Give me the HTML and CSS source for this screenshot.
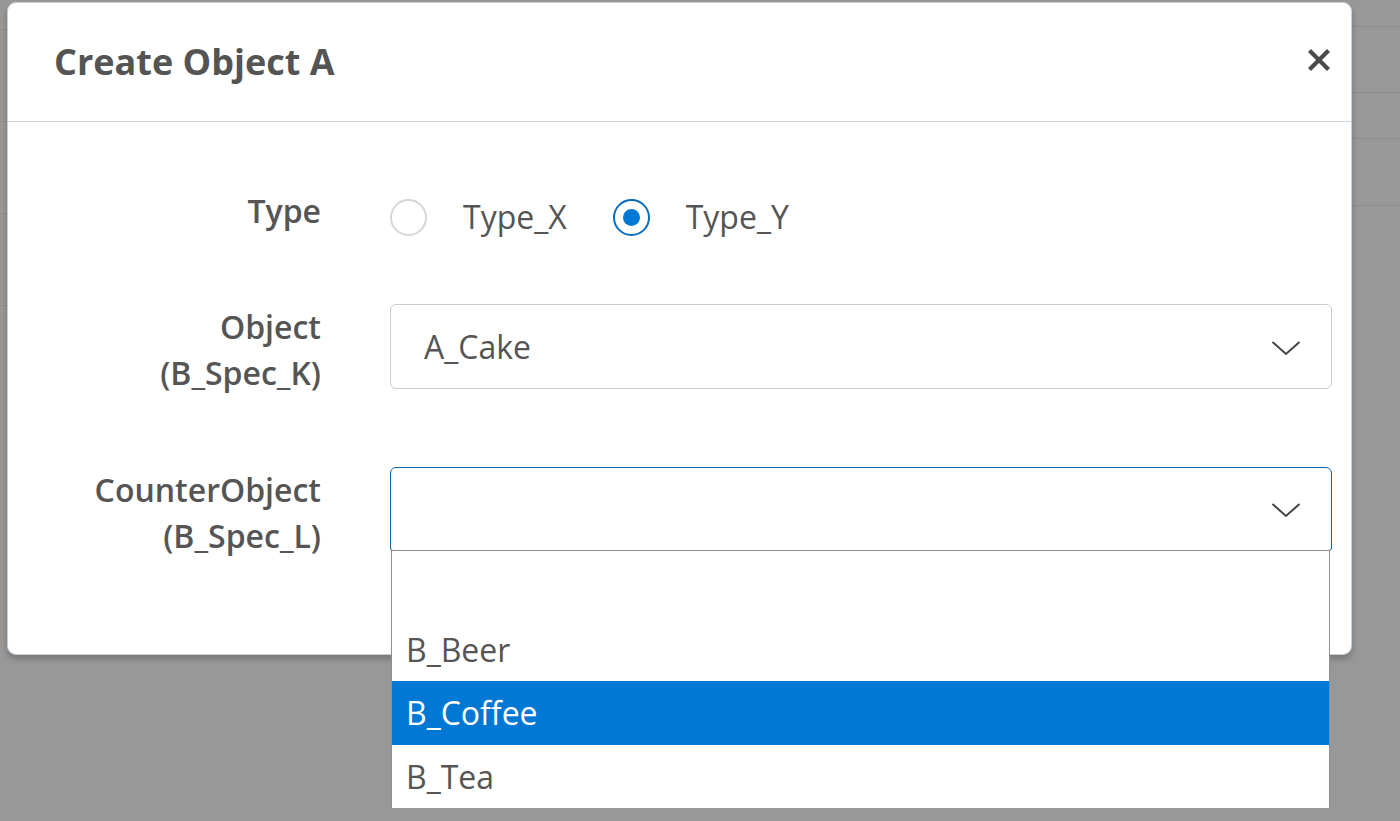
FILE: index.html
```html
<!DOCTYPE html>
<html>
<head>
<meta charset="utf-8">
<link rel="stylesheet" href="styles.css">
</head>
<body>
<div class="page">
  <div class="bg-col bg-left">
    <div class="bg-row r1"></div><div class="bg-row r2"></div><div class="bg-row r2"></div><div class="bg-row r2"></div>
  </div>
  <div class="bg-col bg-right">
    <div class="bg-row q1"></div><div class="bg-row q2"></div><div class="bg-row q3"></div><div class="bg-row q4"></div>
  </div>
</div>

<div class="modal">
  <div class="modal-header">
    <h1 class="title">Create Object A</h1>
    <button class="close" aria-label="Close">
      <svg width="22" height="22" viewBox="0 0 22 22"><path d="M3 3 L19 19 M19 3 L3 19" stroke="#4a4a4a" stroke-width="4.2" stroke-linecap="square"/></svg>
    </button>
  </div>
  <div class="modal-body">
    <div class="row row-type">
      <div class="label">Type</div>
      <div class="control radios">
        <label class="radio"><span class="circle"></span><span class="rtext">Type_X</span></label>
        <label class="radio checked"><span class="circle"><span class="dot"></span></span><span class="rtext">Type_Y</span></label>
      </div>
    </div>
    <div class="row row-obj">
      <div class="label">Object<br>(B_Spec_K)</div>
      <div class="control">
        <div class="select">
          <span class="value">A_Cake</span>
          <svg class="chev" width="30" height="16" viewBox="0 0 30 16"><polyline points="1.5,2 15,14 28.5,2" fill="none" stroke="#454545" stroke-width="2"/></svg>
        </div>
      </div>
    </div>
    <div class="row row-counter">
      <div class="label">CounterObject<br>(B_Spec_L)</div>
      <div class="control">
        <div class="select open">
          <span class="value"></span>
          <svg class="chev" width="30" height="16" viewBox="0 0 30 16"><polyline points="1.5,2 15,14 28.5,2" fill="none" stroke="#454545" stroke-width="2"/></svg>
        </div>
        <ul class="listbox">
          <li class="opt blank">&nbsp;</li>
          <li class="opt">B_Beer</li>
          <li class="opt selected">B_Coffee</li>
          <li class="opt">B_Tea</li>
        </ul>
      </div>
    </div>
  </div>
</div>
</body>
</html>
```

FILE: styles.css
```css
* { box-sizing: border-box; }
html, body { margin: 0; padding: 0; }
body {
  width: 1400px;
  height: 821px;
  overflow: hidden;
  background: #989898;
  font-family: "Open Sans", "Noto Sans", sans-serif;
  color: #555;
}
.page {
  display: flex;
  justify-content: space-between;
  height: 821px;
}
.bg-col { display: flex; flex-direction: column; }
.bg-left { width: 7px; }
.bg-right { width: 48px; }
.bg-row { border-bottom: 1px solid #8c8c8c; }
.r1 { height: 30px; }
.r2 { height: 92px; }
.q1 { height: 27px; }
.q2 { height: 66px; }
.q3 { height: 46px; }
.q4 { height: 67px; }

.modal {
  position: absolute;
  left: 7px;
  top: 2px;
  width: 1345px;
  height: 653px;
  background: #fff;
  border-radius: 9px;
  border: 1px solid #c4cfd8;
  box-shadow: 0 4px 6px rgba(0,0,0,0.22);
}
.modal-header {
  height: 119px;
  border-bottom: 1px solid #c9d4dd;
  display: flex;
  align-items: center;
  justify-content: space-between;
  padding: 0 21px 0 46px;
}
.title {
  margin: 0 0 2px 0;
  font-size: 36px;
  font-weight: 700;
  color: #545454;
}
.close {
  border: 0;
  background: none;
  padding: 0;
  width: 22px;
  height: 22px;
  margin-bottom: 5px;
  display: flex;
}
.modal-body {
  padding: 66px 19px 0 0;
  display: flex;
  flex-direction: column;
}
.row {
  display: grid;
  grid-template-columns: 313px 942px;
  column-gap: 69px;
  align-items: start;
}
.label {
  text-align: right;
  font-size: 32px;
  line-height: 46px;
  font-weight: 600;
  color: #555;
}
.row-type { height: 116px; }
.row-obj { height: 163px; }
.radios {
  display: flex;
  align-items: center;
  padding-top: 6px;
  height: 52px;
}
.radio {
  display: flex;
  align-items: center;
  margin-right: 46px;
}
.circle {
  width: 37px;
  height: 37px;
  border-radius: 50%;
  border: 2px solid #d3d7dc;
  display: flex;
  align-items: center;
  justify-content: center;
  flex: none;
}
.checked .circle { border-color: #0a6ebd; }
.dot {
  width: 17px;
  height: 17px;
  border-radius: 50%;
  background: #0078d4;
}
.rtext {
  font-size: 32px;
  margin-left: 36px;
  color: #555;
  line-height: 46px;
}
.control { position: relative; }
.select {
  height: 85px;
  border: 1px solid #c6ccd2;
  border-radius: 6px;
  display: flex;
  align-items: center;
  justify-content: space-between;
  padding: 0 30px 0 33px;
}
.select .value {
  font-size: 32px;
  color: #555;
}
.select .chev { margin-top: 2px; }
.select.open {
  height: 84px;
  border: 1px solid #0a64ad;
  border-radius: 6px 6px 3px 3px;
}
.listbox {
  position: absolute;
  left: 1px;
  top: 83px;
  width: 939px;
  margin: 0;
  padding: 0;
  list-style: none;
  background: #fff;
  border: 1px solid #8f8f8f;
  border-bottom: 0;
}
.opt {
  height: 63px;
  line-height: 63px;
  padding-left: 14px;
  font-size: 32px;
  color: #555;
}
.opt.blank { height: 67px; }
.opt.selected {
  background: #0078d4;
  color: #fff;
  height: 64px;
}
```
